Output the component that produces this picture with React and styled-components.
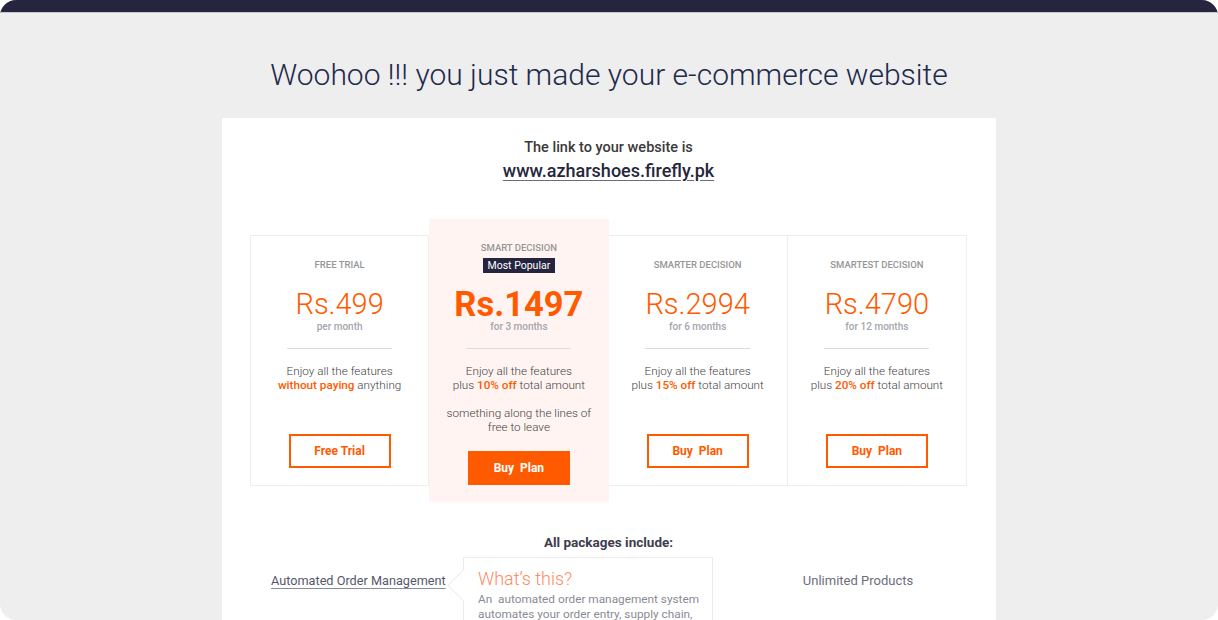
import React from 'react';
import styled, { createGlobalStyle } from 'styled-components';

/* ─────────────────────────────────────────────
   Store created – pricing plans screen
   ───────────────────────────────────────────── */

const ORANGE = '#ff5a00';
const NAVY = '#25253f';

const Global = createGlobalStyle`
  html, body { margin: 0; padding: 0; background: #ffffff; }
  body { font-family: Roboto, "Noto Sans", "Liberation Sans", sans-serif; }
  * { box-sizing: border-box; }
`;

const Frame = styled.div`
  width: 1218px;
  height: 620px;
  border-radius: 16px;
  overflow: hidden;
  background: #eeeeee;
  display: flex;
  flex-direction: column;
`;

const TopBar = styled.div`
  height: 13px;
  flex: none;
  background: ${NAVY};
  border-bottom: 1px solid #c9c9d2;
`;

const Heading = styled.h1`
  margin: 44px 0 0;
  font-size: 30px;
  line-height: 36px;
  font-weight: 300;
  color: #1d2a4a;
  text-align: center;
`;

const Card = styled.div`
  width: 774px;
  margin: 25px auto 0;
  flex: 1;
  background: #ffffff;
  padding: 21px 29px 0 28px;
  display: flex;
  flex-direction: column;
  align-items: center;
`;

const LinkIntro = styled.div`
  font-size: 14.5px;
  line-height: 18px;
  font-weight: 500;
  color: #3a3a3a;
`;

const SiteLink = styled.a`
  margin-top: 3px;
  font-size: 18px;
  line-height: 22px;
  font-weight: 500;
  color: #26263c;
  text-decoration: underline;
  text-decoration-color: #6a6a80;
  text-underline-offset: 3px;
`;

const Plans = styled.div`
  margin-top: 37px;
  width: 717px;
  display: grid;
  grid-template-columns: repeat(4, 1fr);
  align-items: center;
`;

const Plan = styled.div`
  display: flex;
  flex-direction: column;
  align-items: center;
  text-align: center;
  padding: 22px 0 17px;
  background: ${({ $featured }) => ($featured ? '#fff4f1' : '#ffffff')};
  border-top: ${({ $featured }) => ($featured ? 'none' : '1px solid #eeeeee')};
  border-bottom: ${({ $featured }) => ($featured ? 'none' : '1px solid #eeeeee')};
  border-right: ${({ $featured }) => ($featured ? 'none' : '1px solid #eeeeee')};
  &:first-child { border-left: 1px solid #eeeeee; }
`;

const Tier = styled.div`
  font-size: 9.5px;
  line-height: 14px;
  font-weight: 500;
  color: #969696;
  text-transform: uppercase;
`;

const Badge = styled.div`
  margin-top: 3px;
  height: 15px;
  padding: 0 5px;
  background: ${NAVY};
  color: #ffffff;
  font-size: 10.5px;
  line-height: 15px;
`;

const Price = styled.div`
  margin-top: ${({ $featured }) => ($featured ? '14px' : '15px')};
  font-size: ${({ $featured }) => ($featured ? '34.5px' : '29px')};
  line-height: 34px;
  font-weight: ${({ $featured }) => ($featured ? 700 : 300)};
  color: ${ORANGE};
`;

const Period = styled.div`
  font-size: 10px;
  line-height: 12px;
  font-weight: 500;
  color: #a5a5ad;
`;

const Divider = styled.div`
  margin-top: 15px;
  width: 105px;
  height: 1px;
  background: #dcdce0;
`;

const Desc = styled.p`
  margin: ${({ $gap }) => $gap || '15px'} 0 0;
  font-size: 11.7px;
  line-height: 14px;
  font-weight: 300;
  color: #3f3f3f;
`;

const Accent = styled.b`
  font-weight: 500;
  color: ${ORANGE};
`;

const PlanButton = styled.button`
  margin-top: ${({ $featured }) => ($featured ? '17px' : '42px')};
  width: 102px;
  height: 34px;
  border: 2px solid ${ORANGE};
  background: ${({ $featured }) => ($featured ? ORANGE : '#ffffff')};
  color: ${({ $featured }) => ($featured ? '#ffffff' : ORANGE)};
  font-family: inherit;
  font-size: 12px;
  font-weight: 700;
  white-space: pre;
  cursor: pointer;
`;

const IncludesTitle = styled.div`
  margin-top: 31px;
  font-size: 13.5px;
  line-height: 18px;
  font-weight: 700;
  color: #3d3d4d;
`;

const Features = styled.div`
  align-self: stretch;
  margin-top: 22px;
  padding: 0 9px 0 21px;
  display: flex;
  align-items: center;
  justify-content: space-between;
`;

const FeatureItem = styled.div`
  position: relative;
  font-size: ${({ $link }) => ($link ? '12.7px' : '13px')};
  line-height: 16px;
  color: ${({ $link }) => ($link ? '#55596b' : '#6b6e7c')};
  text-decoration: ${({ $link }) => ($link ? 'underline' : 'none')};
  text-decoration-color: #8a8c99;
  text-underline-offset: 3px;
  width: ${({ $link }) => ($link ? 'auto' : '200px')};
  text-align: center;
`;

const Tooltip = styled.div`
  position: absolute;
  left: 192px;
  top: -16px;
  width: 250px;
  padding: 10px 6px 12px 14px;
  background: #ffffff;
  border: 1px solid #ececec;
  text-align: left;
  text-decoration: none;
  &::before {
    content: '';
    position: absolute;
    left: -12px;
    top: 16px;
    width: 22px;
    height: 22px;
    background: #ffffff;
    border-left: 1px solid #ececec;
    border-bottom: 1px solid #ececec;
    transform: rotate(45deg);
  }
`;

const TipTitle = styled.div`
  position: relative;
  font-size: 18px;
  line-height: 22px;
  font-weight: 300;
  color: #ff8a65;
`;

const TipBody = styled.div`
  position: relative;
  margin-top: 2px;
  font-size: 11.8px;
  line-height: 15px;
  color: #8a8b95;
`;

const plans = [
  {
    tier: 'Free Trial',
    price: 'Rs.499',
    period: 'per month',
    desc: <>Enjoy all the features<br /><Accent>without paying</Accent> anything</>,
    cta: 'Free Trial',
  },
  {
    tier: 'Smart Decision',
    featured: true,
    price: 'Rs.1497',
    period: 'for 3 months',
    desc: <>Enjoy all the features<br />plus <Accent>10% off</Accent> total amount</>,
    extra: <>something along the lines of<br />free to leave</>,
    cta: 'Buy  Plan',
  },
  {
    tier: 'Smarter Decision',
    price: 'Rs.2994',
    period: 'for 6 months',
    desc: <>Enjoy all the features<br />plus <Accent>15% off</Accent> total amount</>,
    cta: 'Buy  Plan',
  },
  {
    tier: 'Smartest Decision',
    price: 'Rs.4790',
    period: 'for 12 months',
    desc: <>Enjoy all the features<br />plus <Accent>20% off</Accent> total amount</>,
    cta: 'Buy  Plan',
  },
];

export default function App() {
  return (
    <>
      <Global />
      <Frame>
        <TopBar />
        <Heading>Woohoo !!! you just made your e-commerce website</Heading>
        <Card>
          <LinkIntro>The link to your website is</LinkIntro>
          <SiteLink href="#">www.azharshoes.firefly.pk</SiteLink>

          <Plans>
            {plans.map((p) => (
              <Plan key={p.tier} $featured={p.featured}>
                <Tier>{p.tier}</Tier>
                {p.featured && <Badge>Most Popular</Badge>}
                <Price $featured={p.featured}>{p.price}</Price>
                <Period>{p.period}</Period>
                <Divider />
                <Desc>{p.desc}</Desc>
                {p.extra && <Desc $gap="14px">{p.extra}</Desc>}
                <PlanButton $featured={p.featured}>{p.cta}</PlanButton>
              </Plan>
            ))}
          </Plans>

          <IncludesTitle>All packages include:</IncludesTitle>
          <Features>
            <FeatureItem $link>
              Automated Order Management
              <Tooltip>
                <TipTitle>What’s this?</TipTitle>
                <TipBody>
                  An&nbsp; automated order management system automates your order entry, supply chain,
                  inventory and delivery in one place.
                </TipBody>
              </Tooltip>
            </FeatureItem>
            <FeatureItem>Unlimited Products</FeatureItem>
          </Features>
        </Card>
      </Frame>
    </>
  );
}
